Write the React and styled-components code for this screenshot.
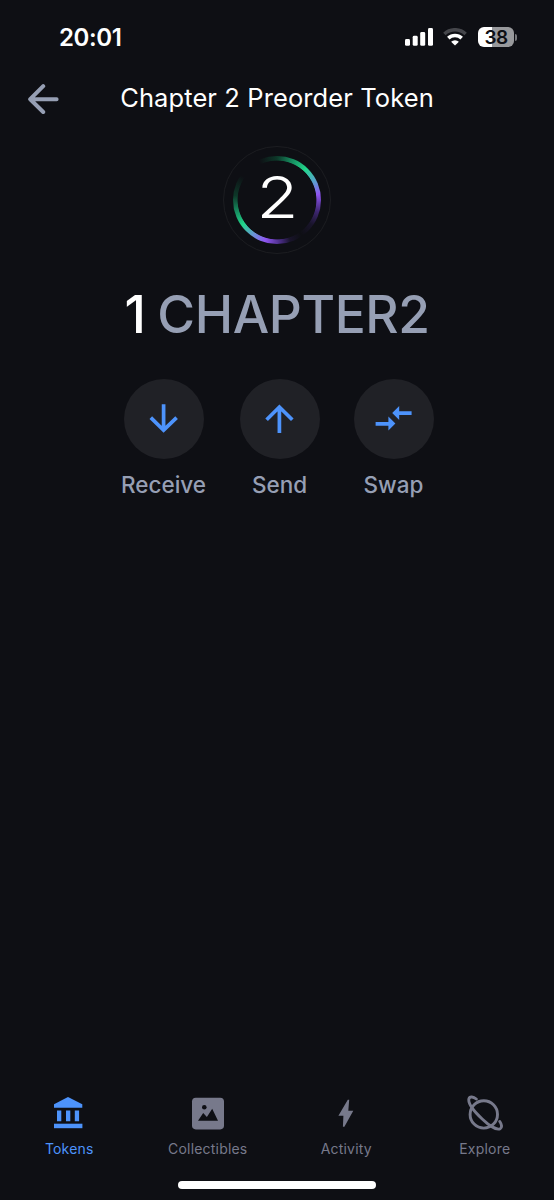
import styled, { createGlobalStyle } from "styled-components";

const GlobalStyle = createGlobalStyle`
  * {
    box-sizing: border-box;
  }
  body {
    margin: 0;
    background: #0e0f14;
    font-family: "Inter", "Liberation Sans", sans-serif;
  }
`;

const BankIcon = () => (
  <svg width="36" height="36" viewBox="0 0 36 36" fill="currentColor">
    <path d="M17 2.1 L31.3 9.2 V12.8 H3 V9.2 Z" />
    <path d="M6 15.4h4.3v10.8H6zM15 15.4h4.3v10.8H15zM23.8 15.4h4.3v10.8h-4.3z" />
    <path d="M3 28.7h28.4v4.5H3z" />
  </svg>
);

const ImageIcon = () => (
  <svg width="36" height="36" viewBox="0 0 36 36">
    <rect x="2" y="2.8" width="32" height="31.6" rx="3.8" fill="currentColor" />
    <circle cx="14.3" cy="12.2" r="2.3" fill="#0e0f14" />
    <path d="M8 25.8 L13.2 18 L16.9 22 L22.2 13.7 L28 25.8 Z" fill="#0e0f14" />
  </svg>
);

const BoltIcon = () => (
  <svg width="36" height="36" viewBox="0 0 36 36" fill="currentColor">
    <path d="M19.8 4.8 L10.4 20.8 H15.4 L14.9 31.8 H16.4 L25.3 15.8 H20.3 L21.2 4.8 Z" />
  </svg>
);

const PlanetIcon = () => (
  <svg
    width="38"
    height="38"
    viewBox="0 0 38 38"
    fill="none"
    stroke="currentColor"
    strokeWidth="2.9"
    strokeLinecap="round"
  >
    <circle cx="17.8" cy="20.4" r="13.7" />
    <path d="M10.3 5 C7.5 2.7 3.6 2 2.9 4.8 C1.9 9.2 8.3 17.6 16.2 25 C23.5 32 31 36.4 34.2 34.7 C36.4 33.4 35.6 30.2 33.8 27.5" />
  </svg>
);

const tabs = [
  { label: "Tokens", icon: <BankIcon />, active: true },
  { label: "Collectibles", icon: <ImageIcon /> },
  { label: "Activity", icon: <BoltIcon /> },
  { label: "Explore", icon: <PlanetIcon /> },
];

const App = () => {
  return (
    <Screen>
      <GlobalStyle />
      <StatusBar>
        <Time>20:01</Time>
        <StatusIcons>
          <svg width="28" height="18" viewBox="0 0 28 18" fill="#fff">
            <rect x="0" y="11" width="5" height="6.8" rx="1.4" />
            <rect x="7.7" y="7.8" width="5" height="10" rx="1.4" />
            <rect x="15.2" y="4" width="5" height="13.8" rx="1.4" />
            <rect x="23" y="0" width="5" height="17.8" rx="1.4" />
          </svg>
          <svg width="24" height="18" viewBox="0 0 24 18" fill="none">
            <path d="M1.4 6 A15.4 15.4 0 0 1 22.6 6" stroke="#45464b" strokeWidth="3.6" />
            <path d="M5.3 10.1 A9.8 9.8 0 0 1 18.7 10.1" stroke="#fff" strokeWidth="3.6" />
            <path d="M12 17.6 L8.1 13.7 A5.7 5.7 0 0 1 15.9 13.7 Z" fill="#fff" />
          </svg>
          <Battery>
            <BatteryBody>38</BatteryBody>
            <BatteryCap />
          </Battery>
        </StatusIcons>
      </StatusBar>

      <Header>
        <BackButton aria-label="Back">
          <svg
            width="32"
            height="32"
            viewBox="0 0 32 32"
            fill="none"
            stroke="#969fb4"
            strokeWidth="4"
            strokeLinecap="round"
            strokeLinejoin="round"
          >
            <path d="M28.6 16.2H2.2M15.2 3.2 L2.2 16.2 L15.2 29" />
          </svg>
        </BackButton>
        <Title>Chapter 2 Preorder Token</Title>
      </Header>

      <TokenLogo>
        <Ring>
          <Digit>2</Digit>
        </Ring>
      </TokenLogo>

      <Balance>
        <Amount>1</Amount>
        <Symbol>CHAPTER2</Symbol>
      </Balance>

      <Actions>
        <Action $width={116}>
          <ActionCircle>
            <svg width="40" height="40" viewBox="0 0 40 40" fill="none" stroke="#4d93fb" strokeWidth="3.7">
              <path d="M19.6 5.2 V31 M6.8 18.6 L19.6 31.2 L32.6 18.6" />
            </svg>
          </ActionCircle>
          <ActionLabel>Receive</ActionLabel>
        </Action>
        <Action $width={116}>
          <ActionCircle>
            <svg width="40" height="40" viewBox="0 0 40 40" fill="none" stroke="#4d93fb" strokeWidth="3.7">
              <path d="M19.4 34 V8 M6.6 20.8 L19.4 8 L32.3 20.8" />
            </svg>
          </ActionCircle>
          <ActionLabel>Send</ActionLabel>
        </Action>
        <Action $width={112}>
          <ActionCircle>
            <svg width="40" height="40" viewBox="0 0 40 40" fill="#4d93fb">
              <path d="M1.6 23 H14.4 V17.6 L21.4 24.6 L14.4 31.6 V26.7 H1.6 Z" />
              <path d="M37.6 12.2 H25.2 V7 L18.2 14 L25.2 21 V15.9 H37.6 Z" />
            </svg>
          </ActionCircle>
          <ActionLabel>Swap</ActionLabel>
        </Action>
      </Actions>

      <TabBar>
        {tabs.map((tab) => (
          <Tab key={tab.label} $active={tab.active}>
            <TabIcon>{tab.icon}</TabIcon>
            <span>{tab.label}</span>
          </Tab>
        ))}
      </TabBar>
      <HomeIndicator />
    </Screen>
  );
};

const Screen = styled.div`
  display: flex;
  flex-direction: column;
  width: 554px;
  height: 1200px;
  overflow: hidden;
  background: #0e0f14;
  color: #fff;
`;

const StatusBar = styled.div`
  display: flex;
  align-items: center;
  justify-content: space-between;
  height: 74px;
  padding: 0 37px 0 59px;
`;

const Time = styled.div`
  padding-top: 1px;
  font-size: 24px;
  line-height: 31px;
  font-weight: 600;
  letter-spacing: -0.4px;
`;

const StatusIcons = styled.div`
  display: flex;
  align-items: center;
  gap: 10px;
`;

const Battery = styled.div`
  display: flex;
  align-items: center;
  gap: 1px;
  margin-left: 1px;
`;

const BatteryBody = styled.div`
  width: 36px;
  height: 20px;
  border-radius: 6px;
  background: linear-gradient(90deg, #fff 38%, #98999c 38%);
  color: #0e0f14;
  font-size: 19px;
  line-height: 21px;
  font-weight: 600;
  letter-spacing: -0.6px;
  text-align: center;
`;

const BatteryCap = styled.div`
  width: 2px;
  height: 7px;
  border-radius: 0 3px 3px 0;
  background: #77787c;
`;

const Header = styled.div`
  display: grid;
  grid-template-columns: 92px 1fr 92px;
  align-items: center;
  height: 48px;
`;

const BackButton = styled.button`
  display: flex;
  padding: 2px 0 0 28px;
  border: none;
  background: transparent;
`;

const Title = styled.h1`
  margin: 0;
  font-size: 25.5px;
  line-height: 32px;
  font-weight: 400;
  letter-spacing: 0.1px;
  text-align: center;
  white-space: nowrap;
`;

const TokenLogo = styled.div`
  display: flex;
  align-items: center;
  justify-content: center;
  align-self: center;
  width: 108px;
  height: 108px;
  margin-top: 24px;
  border: 1px solid #1c1d21;
  border-radius: 50%;
`;

const Ring = styled.div`
  display: flex;
  align-items: center;
  justify-content: center;
  width: 88px;
  height: 88px;
  border-radius: 50%;
  background: radial-gradient(circle, #0e0f14 39px, transparent 39.8px),
    conic-gradient(
      #0d3829 0deg,
      #168a5e 20deg,
      #22d68c 43deg,
      #5b9fd0 64deg,
      #8f55f2 82deg,
      #3d2670 106deg,
      #19142b 125deg,
      #0e0f14 145deg,
      #19142b 162deg,
      #3d2670 172deg,
      #8f55f2 196deg,
      #6b93d8 214deg,
      #22d68c 234deg,
      #168a5e 255deg,
      #0d3829 276deg,
      #0e0f14 305deg,
      #0e0f14 335deg,
      #0d3829 360deg
    );
`;

const Digit = styled.span`
  font-size: 57px;
  line-height: 60px;
  font-weight: 300;
  margin-top: -4px;
  transform: scaleX(1.2);
`;

const Balance = styled.div`
  display: flex;
  justify-content: center;
  gap: 12px;
  margin-top: 28px;
  font-size: 51.5px;
  line-height: 64px;
  font-weight: 500;
  letter-spacing: -0.4px;
`;

const Amount = styled.span`
  font-weight: 500;
`;

const Symbol = styled.span`
  color: #969fb4;
`;

const Actions = styled.div`
  display: flex;
  justify-content: center;
  margin-top: 33px;
  padding-left: 1px;
`;

const Action = styled.div`
  display: flex;
  flex-direction: column;
  align-items: center;
  width: ${(props) => props.$width}px;
`;

const ActionCircle = styled.button`
  display: flex;
  align-items: center;
  justify-content: center;
  width: 80px;
  height: 80px;
  padding: 0;
  border: none;
  border-radius: 50%;
  background: #202126;
`;

const ActionLabel = styled.span`
  margin-top: 12px;
  font-size: 22.5px;
  line-height: 28px;
  font-weight: 500;
  color: #969fb4;
`;

const TabBar = styled.nav`
  display: grid;
  grid-template-columns: repeat(4, 1fr);
  margin-top: auto;
`;

const Tab = styled.div`
  display: flex;
  flex-direction: column;
  align-items: center;
  gap: 7px;
  color: ${(props) => (props.$active ? "#4d93fb" : "#77798b")};
  font-size: 14px;
  line-height: 20px;
  letter-spacing: 0.2px;
`;

const TabIcon = styled.div`
  display: flex;
  align-items: center;
  justify-content: center;
  height: 38px;
`;

const HomeIndicator = styled.div`
  align-self: center;
  width: 198px;
  height: 8px;
  margin: 22px 0 11px;
  border-radius: 4px;
  background: #fff;
`;

export default App;
